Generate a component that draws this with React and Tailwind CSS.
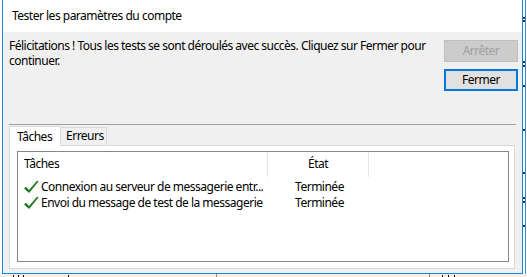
const font = 'font-["Segoe_UI","Noto_Sans",sans-serif] tracking-[-0.5px]';

function Check() {
  return (
    <svg width="16" height="16" viewBox="0 0 16 16" className="shrink-0">
      <path d="M1 9.5 L3 7.8 L6 11 L14.2 1.5 L15.5 2.6 L6.1 14 Z" fill="#1f7a1f" />
    </svg>
  );
}

const tasks = [
  { name: 'Connexion au serveur de messagerie entr...', state: 'Terminée' },
  { name: 'Envoi du message de test de la messagerie', state: 'Terminée' },
];

// bits of the Outlook window peeking out behind the dialog
const edgeMarks = [16, 19, 60, 64, 84, 128, 171, 196, 200, 224];

export default function App() {
  return (
    <div className={`relative h-[277px] w-[527px] overflow-hidden bg-white text-[12px] text-black ${font}`}>
      <div className="absolute left-[523px] top-0 flex h-full w-[4px] flex-col">
        {edgeMarks.map((y, i) => (
          <div key={y} className="flex h-[4px] items-center" style={{ marginTop: i === 0 ? y : y - edgeMarks[i - 1] - 4 }}>
            <div className="h-[2px] w-[3px] bg-[#333]" />
          </div>
        ))}
      </div>
      <div className="absolute left-[525px] top-0 h-full w-px bg-[#3c8fdc]" />
      <div className="absolute left-0 top-[274px] flex h-[3px] w-full items-end bg-[#f0f0f0]">
        <div className="ml-[13px] flex h-[2px] w-[70px] gap-[4px]">
          <div className="w-[1px] bg-black" />
          <div className="w-[1px] bg-black" />
          <div className="w-[1px] bg-black" />
          <div className="ml-[40px] w-[1px] bg-black" />
        </div>
        <div className="ml-[133px] h-full w-px bg-[#8c8c8c]" />
        <div className="ml-[212px] h-full w-px bg-[#8c8c8c]" />
        <div className="ml-[12px] flex h-[2px] w-[80px] gap-[5px]">
          <div className="w-[1px] bg-black" />
          <div className="w-[1px] bg-black" />
          <div className="w-[1px] bg-black" />
        </div>
      </div>

      {/* dialog */}
      <div className="absolute left-[2px] top-[-1px] flex h-[275px] w-[521px] flex-col border border-[#1883d7] bg-[#f0f0f0]">
        <div className="flex h-[32px] shrink-0 items-center bg-white pl-[9px] pb-[1px]">
          Tester les paramètres du compte
        </div>

        <div className="flex flex-1 flex-col pl-[6px] pr-[6px]">
          <div className="flex justify-between">
            <p className="w-[432px] pt-[6px] leading-[15px]">
              Félicitations ! Tous les tests se sont déroulés avec succès. Cliquez sur Fermer pour continuer.
            </p>
            <div className="-mr-[2px] flex flex-col gap-[7px] pt-[8px]">
              <button
                disabled
                className="h-[22px] w-[74px] border border-[#bfbfbf] bg-[#cccccc] text-[#a0a0a0]"
              >
                Arrêter
              </button>
              <button className="h-[22px] w-[74px] border-2 border-[#0078d7] bg-[#e1e1e1]">
                Fermer
              </button>
            </div>
          </div>

          <div className="mt-[33px] border-t border-[#a0a0a0]" />

          <div className="mt-[1px] flex h-[19px] items-end">
            <div className="relative z-10 -mb-px flex h-[20px] w-[52px] items-start border border-b-0 border-[#d9d9d9] bg-white pl-[7px] pt-[1px]">
              Tâches
            </div>
            <div className="flex h-[18px] w-[46px] items-center border border-b-0 border-l-0 border-[#d9d9d9] pl-[5px] pb-[1px]">
              Erreurs
            </div>
          </div>

          <div className="mr-[1px] flex h-[124px] flex-col border border-[#d9d9d9] bg-white pb-[6px] pl-[7px] pr-[5px] pt-[5px]">
            <div className="flex flex-1 flex-col border border-[#828790] bg-white">
              <div className="flex h-[25px] shrink-0">
                <div className="flex w-[250px] items-center border-r border-[#e5e5e5] pl-[6px] pb-[1px]">
                  Tâches
                </div>
                <div className="flex w-[101px] items-center justify-center border-r border-[#e5e5e5] pb-[1px]">
                  État
                </div>
              </div>
              <div className="mt-[2px] flex flex-col">
                {tasks.map((t) => (
                  <div key={t.name} className="flex h-[16px] items-center">
                    <div className="flex w-[251px] items-center gap-[2px] pl-[5px]">
                      <Check />
                      <span className="whitespace-nowrap leading-[16px]">{t.name}</span>
                    </div>
                    <div className="w-[101px] text-center leading-[16px]">{t.state}</div>
                  </div>
                ))}
              </div>
            </div>
          </div>
        </div>
      </div>
    </div>
  );
}
